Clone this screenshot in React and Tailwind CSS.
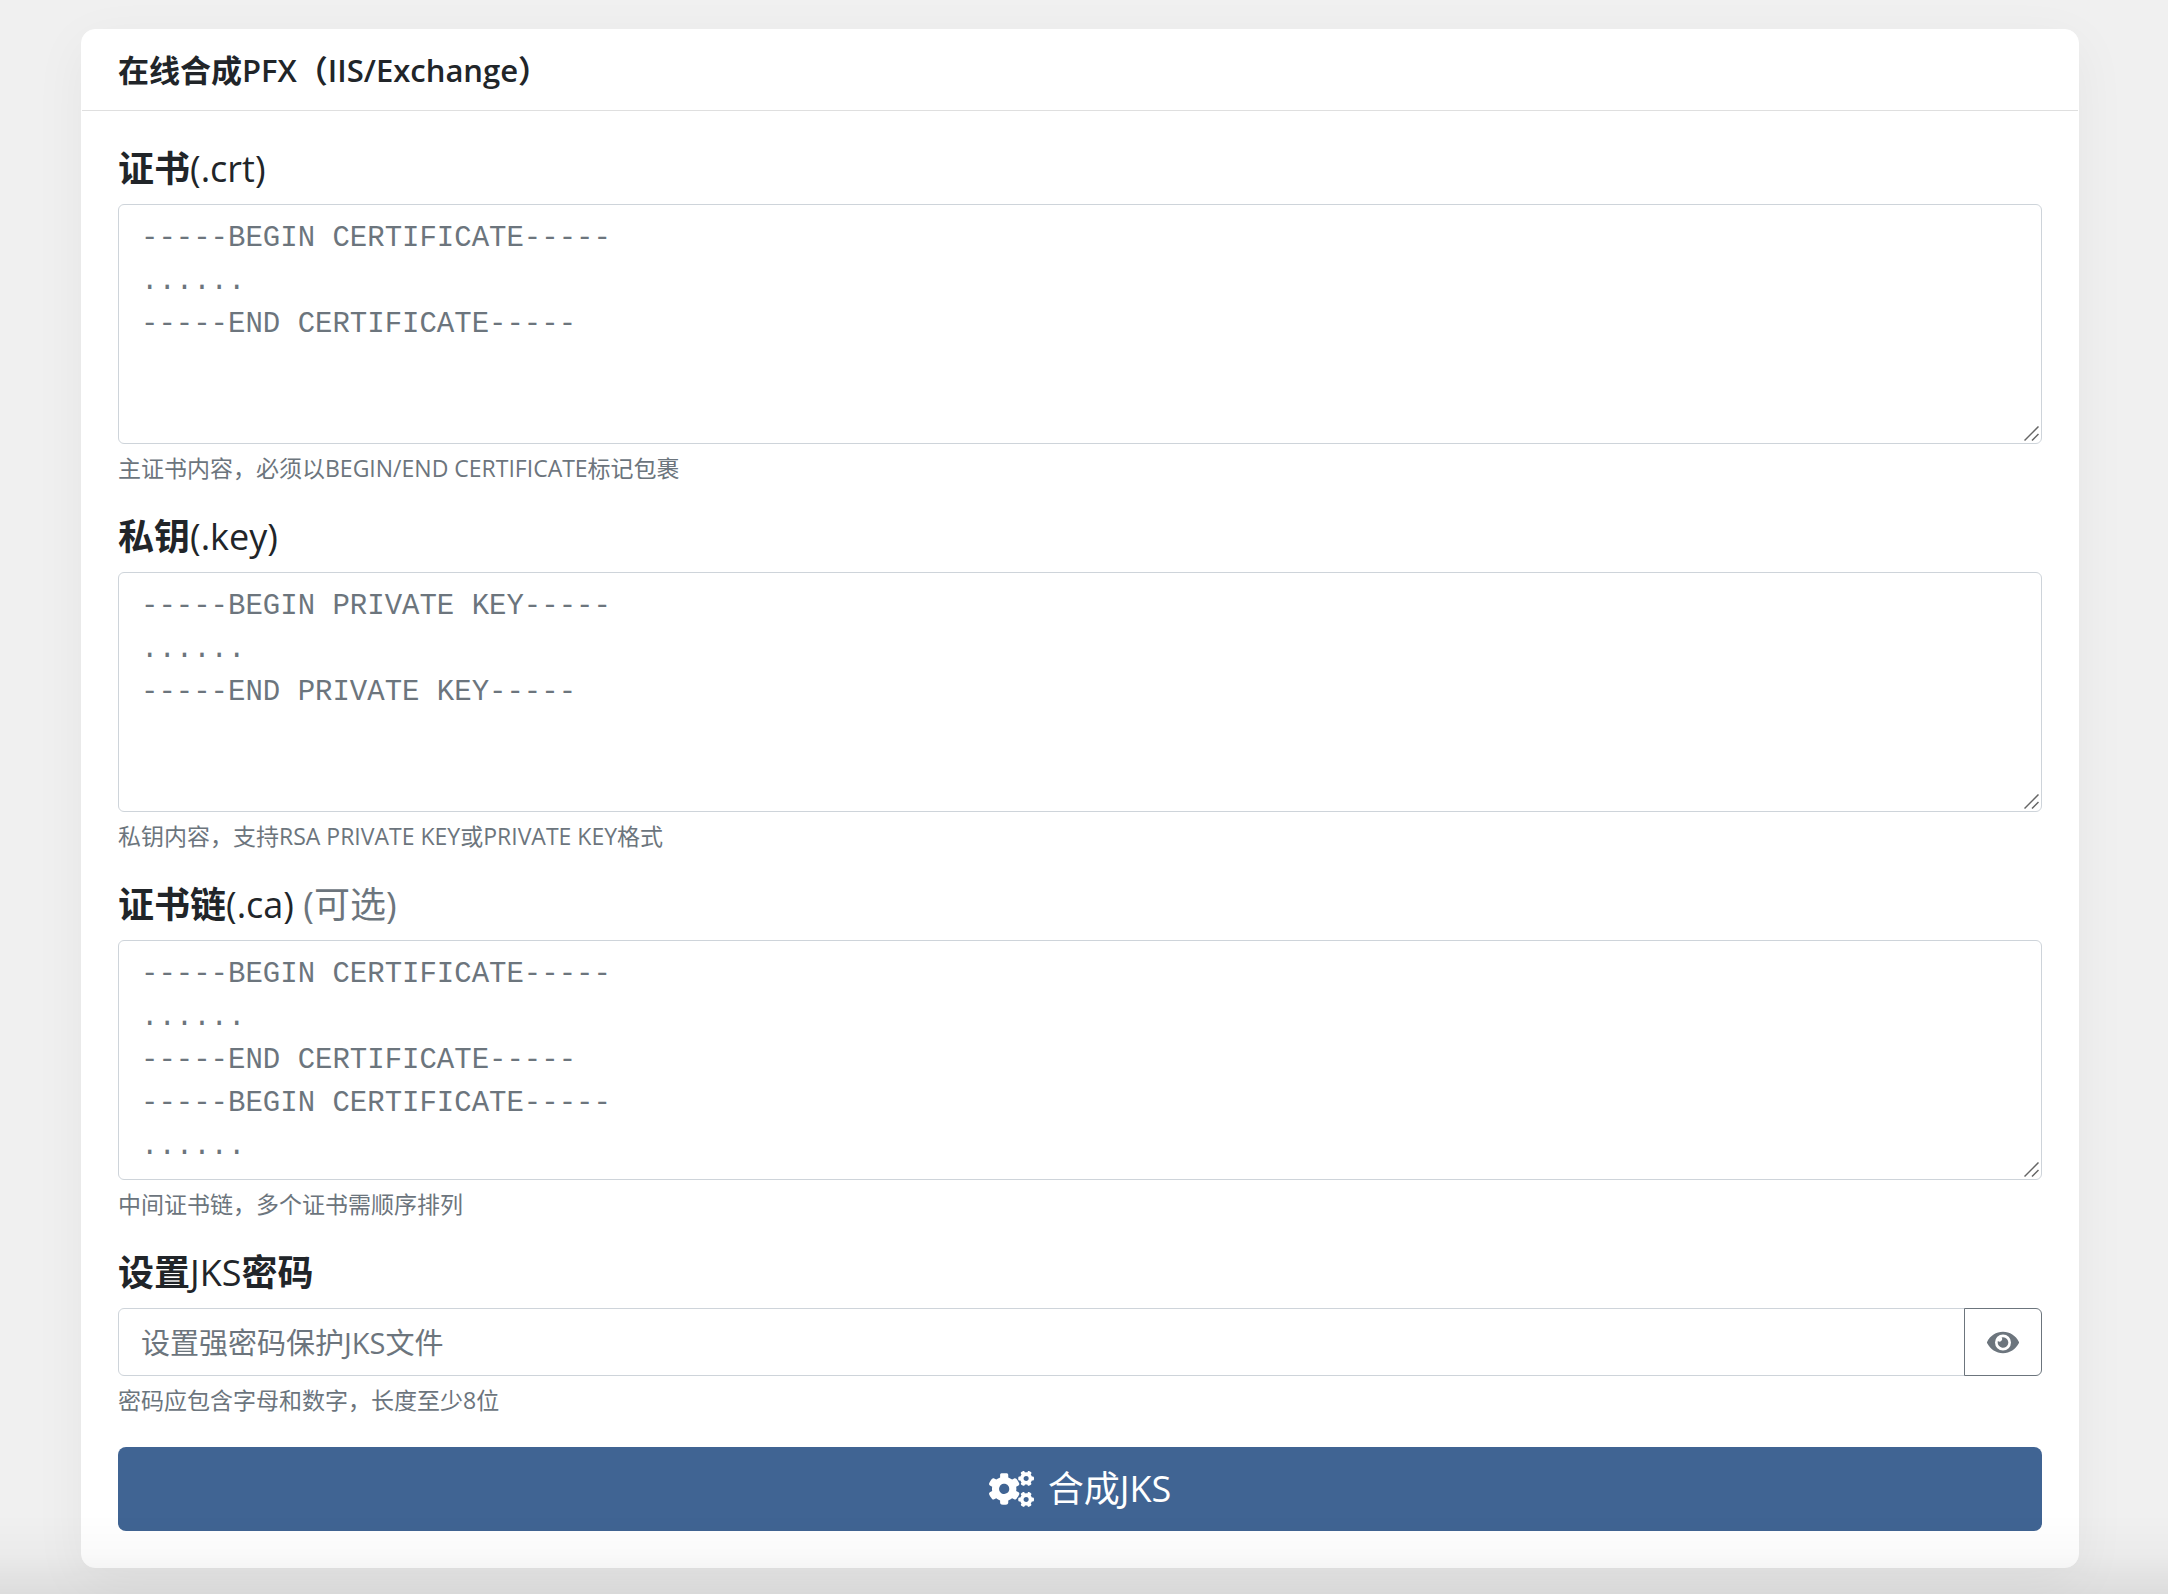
import { useState } from 'react'
import { FaCogs, FaEye, FaEyeSlash } from 'react-icons/fa'

const CERT_PLACEHOLDER = '-----BEGIN CERTIFICATE-----\n......\n-----END CERTIFICATE-----'
const KEY_PLACEHOLDER = '-----BEGIN PRIVATE KEY-----\n......\n-----END PRIVATE KEY-----'
const CHAIN_PLACEHOLDER = `${CERT_PLACEHOLDER}\n-----BEGIN CERTIFICATE-----\n......`

const FIELDS = [
  { id: 'crt', name: '证书', suffix: '(.crt)', placeholder: CERT_PLACEHOLDER, help: '主证书内容，必须以BEGIN/END CERTIFICATE标记包裹' },
  { id: 'key', name: '私钥', suffix: '(.key)', placeholder: KEY_PLACEHOLDER, help: '私钥内容，支持RSA PRIVATE KEY或PRIVATE KEY格式' },
  { id: 'ca', name: '证书链', suffix: '(.ca)', optional: true, placeholder: CHAIN_PLACEHOLDER, help: '中间证书链，多个证书需顺序排列' },
]

function FormGroup({ id, label, help, children }) {
  return (
    <div className="mb-[30px]">
      <label htmlFor={id} className="mb-[14px] block text-[36px] leading-[43px]">{label}</label>
      {children}
      <p id={`${id}-help`} className="mt-[7px] text-[23px] leading-[34px] text-[#6c757d]">{help}</p>
    </div>
  )
}

function PemField({ id, name, suffix, optional, placeholder, help }) {
  const label = (
    <>
      <b className="font-bold">{name}</b>
      {suffix}
      {optional && <span className="text-[#6c757d]"> (可选)</span>}
    </>
  )

  return (
    <FormGroup id={id} label={label} help={help}>
      <div className="relative">
        <textarea
          id={id}
          rows={5}
          placeholder={placeholder}
          aria-describedby={`${id}-help`}
          className="block w-full resize-y overflow-hidden rounded-md border border-[#ced4da] bg-white px-[22px] pt-3 pb-[11px] font-['Liberation_Mono',monospace] text-[29px] leading-[43px] placeholder:text-[#6c757d] [&::-webkit-resizer]:hidden"
        />
        <svg viewBox="0 0 15 15" className="pointer-events-none absolute right-[3px] bottom-[3px] size-[15px]" aria-hidden>
          <path d="M0.5 14.5L14.5 0.5M8 14.5L14.5 8" fill="none" stroke="#666" strokeWidth="1.5" />
        </svg>
      </div>
    </FormGroup>
  )
}

export default function App() {
  const [visible, setVisible] = useState(false)
  const EyeIcon = visible ? FaEyeSlash : FaEye

  return (
    <main className="min-h-screen bg-[#f0f0f0] pt-[29px] pr-[89px] pb-[26px] pl-[81px] font-['Open_Sans','Noto_Sans_CJK_SC',sans-serif] text-[#212529]">
      <section className="rounded-[14px] border border-white bg-white shadow-[0_14px_54px_rgba(0,0,0,0.05)]">
        <header className="border-b border-[#dfdfdf] px-9 py-[18px]">
          <h1 className="text-[31px] leading-[44px] font-semibold">在线合成PFX（IIS/Exchange）</h1>
        </header>
        <form className="p-9" onSubmit={(e) => e.preventDefault()}>
          {FIELDS.map((field) => (
            <PemField key={field.id} {...field} />
          ))}
          <FormGroup
            id="password"
            label={<><b className="font-bold">设置</b>JKS<b className="font-bold">密码</b></>}
            help="密码应包含字母和数字，长度至少8位"
          >
            <div className="flex">
              <input
                id="password"
                type={visible ? 'text' : 'password'}
                placeholder="设置强密码保护JKS文件"
                aria-describedby="password-help"
                className="h-[68px] min-w-0 flex-1 rounded-l-md border border-[#ced4da] bg-white px-[22px] text-[29px] leading-[43px] placeholder:text-[#6c757d]"
              />
              <button
                type="button"
                aria-label="显示密码"
                onClick={() => setVisible(!visible)}
                className="-ml-px flex w-[78px] items-center justify-center rounded-r-md border border-[#6c757d] text-[#6c757d]"
              >
                <EyeIcon className="h-[29px] w-[32px]" />
              </button>
            </div>
          </FormGroup>
          <button
            type="submit"
            className="flex h-[84px] w-full items-center justify-center gap-[14px] rounded-lg bg-[#406493] text-[36px] leading-[54px] text-white"
          >
            <FaCogs className="h-9 w-[45px]" />
            合成JKS
          </button>
        </form>
      </section>
      {/* soft fade above the bottom edge of the window */}
      <div className="pointer-events-none fixed inset-x-0 bottom-0 h-20 bg-linear-to-t from-black/8 via-black/2 to-transparent" />
    </main>
  )
}
